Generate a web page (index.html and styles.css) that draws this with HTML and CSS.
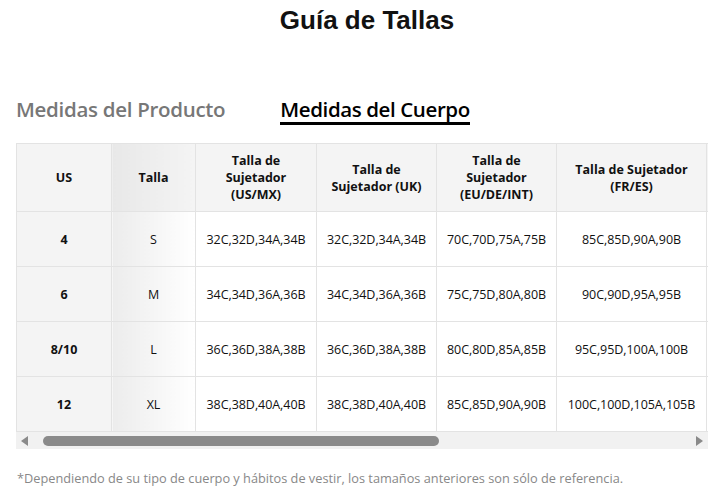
FILE: index.html
```html
<!DOCTYPE html>
<html lang="es">
<head>
<meta charset="utf-8">
<title>Guía de Tallas</title>
<link rel="stylesheet" href="styles.css">
</head>
<body>
<div class="page">
  <h1 class="title">Guía de Tallas</h1>
  <div class="tabs">
    <div class="tab">Medidas del Producto</div>
    <div class="tab active">Medidas del Cuerpo</div>
  </div>
  <div class="table-wrap">
    <div class="scroller">
      <table class="sizes">
        <colgroup>
          <col class="c1"><col class="c2"><col class="c3"><col class="c4"><col class="c5"><col class="c6"><col class="c7">
        </colgroup>
        <thead>
          <tr>
            <th class="sticky">US</th>
            <th class="shadow">Talla</th>
            <th>Talla de<br>Sujetador<br>(US/MX)</th>
            <th>Talla de<br>Sujetador (UK)</th>
            <th>Talla de<br>Sujetador<br>(EU/DE/INT)</th>
            <th>Talla de Sujetador<br>(FR/ES)</th>
            <th></th>
          </tr>
        </thead>
        <tbody>
          <tr><td class="sticky">4</td><td class="shadow">S</td><td>32C,32D,34A,34B</td><td>32C,32D,34A,34B</td><td>70C,70D,75A,75B</td><td>85C,85D,90A,90B</td><td></td></tr>
          <tr><td class="sticky">6</td><td class="shadow">M</td><td>34C,34D,36A,36B</td><td>34C,34D,36A,36B</td><td>75C,75D,80A,80B</td><td>90C,90D,95A,95B</td><td></td></tr>
          <tr><td class="sticky">8/10</td><td class="shadow">L</td><td>36C,36D,38A,38B</td><td>36C,36D,38A,38B</td><td>80C,80D,85A,85B</td><td>95C,95D,100A,100B</td><td></td></tr>
          <tr><td class="sticky">12</td><td class="shadow">XL</td><td>38C,38D,40A,40B</td><td>38C,38D,40A,40B</td><td>85C,85D,90A,90B</td><td>100C,100D,105A,105B</td><td></td></tr>
        </tbody>
      </table>
    </div>
    <div class="scrollbar">
      <span class="arrow left"></span>
      <div class="track"><div class="thumb"></div></div>
      <span class="arrow right"></span>
    </div>
  </div>
  <p class="note">*Dependiendo de su tipo de cuerpo y hábitos de vestir, los tamaños anteriores son sólo de referencia.</p>
</div>
</body>
</html>
```

FILE: styles.css
```css
* { box-sizing: border-box; }
html, body { margin: 0; padding: 0; background: #fff; }
body { font-family: "Open Sans", "Noto Sans", sans-serif; color: #000; }

.page { width: 719px; padding: 0 11px 0 16px; }

.title {
  margin: 0;
  padding-top: 5px;
  height: 34px;
  font-family: "Liberation Sans", Arial, sans-serif;
  font-weight: bold;
  font-size: 26px;
  line-height: 30px;
  text-align: center;
  color: #111;
  padding-left: 10px;
}

.tabs {
  display: flex;
  gap: 55px;
  margin-top: 60px;
  height: 49px;
  align-items: flex-start;
}
.tab {
  font-family: "Open Sans", sans-serif;
  font-weight: 600;
  font-size: 20.5px;
  line-height: 26px;
  letter-spacing: -0.3px;
  color: #777;
  padding-top: 2px;
  padding-bottom: 0;
  border-bottom: 3px solid transparent;
}
.tab.active { color: #000; border-bottom-color: #000; letter-spacing: -0.4px; }

.table-wrap { width: 692px; }
.scroller { overflow: hidden; width: 692px; }

.sizes {
  border-collapse: collapse;
  table-layout: fixed;
  width: 840px;
  font-size: 12.5px;
}
.c1 { width: 95px; } .c2 { width: 84px; } .c3 { width: 121px; }
.c4 { width: 120px; } .c5 { width: 120px; } .c6 { width: 150px; } .c7 { width: 150px; }

.sizes th, .sizes td {
  border: 1px solid #e3e3e3;
  text-align: center;
  vertical-align: middle;
  padding: 0 6px;
}
.sizes th {
  background: #f4f4f4;
  font-weight: 700;
  height: 68px;
  line-height: 17px;
  color: #111;
}
.sizes td { height: 55px; color: #111; letter-spacing: -0.05px; }
.sizes td.sticky { background: #f4f4f4; font-weight: 700; letter-spacing: 0; }
.sizes td.shadow { background: linear-gradient(to right, #ececec, #fff); letter-spacing: 0; }
.sizes th.shadow { background: linear-gradient(to right, #e8e8e8, #f4f4f4); }

.scrollbar {
  display: flex;
  align-items: center;
  height: 17px;
  background: #f1f1f1;
  padding: 0 5px;
}
.arrow { width: 0; height: 0; border-top: 5px solid transparent; border-bottom: 5px solid transparent; }
.arrow.left { border-right: 7px solid #8a8a8a; }
.arrow.right { border-left: 7px solid #8a8a8a; }
.track { flex: 1; padding: 0 12px 0 15px; }
.thumb { width: 396px; height: 10px; border-radius: 5px; background: #8a8a8a; }

.note {
  margin: 20px 0 0 1px;
  font-size: 12.75px;
  color: #888;
  letter-spacing: 0;
}
```
